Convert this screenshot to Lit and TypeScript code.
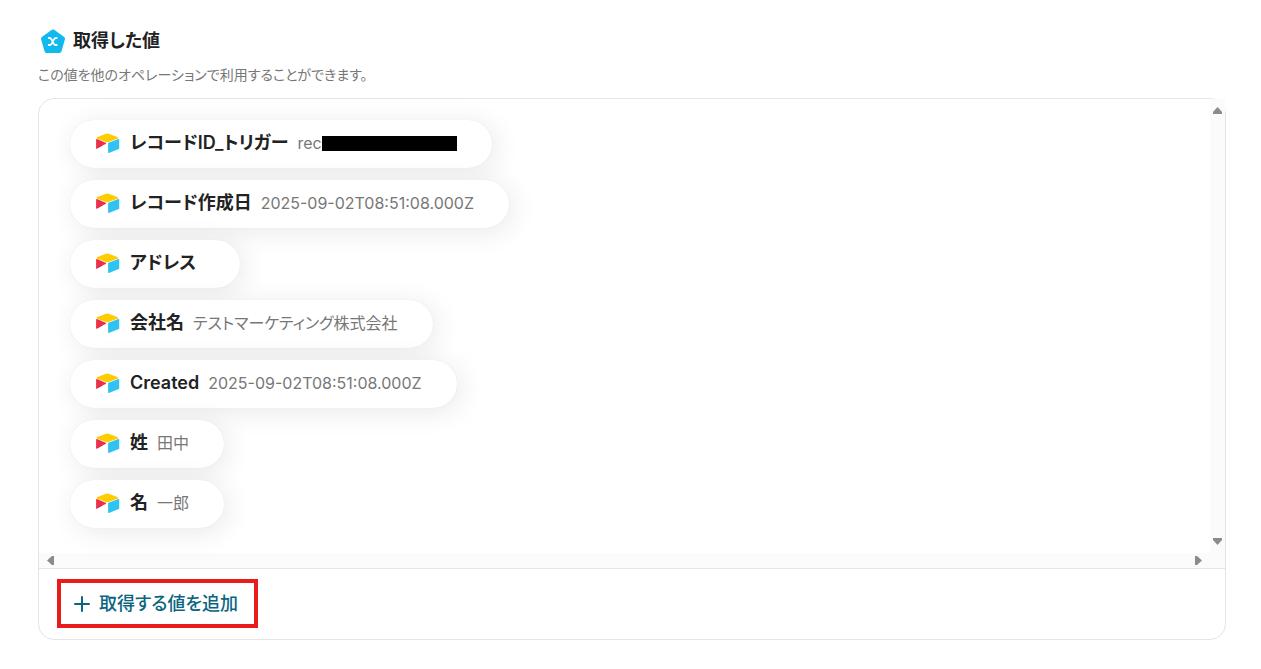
import { LitElement, html, css, nothing } from "lit";
import { customElement, property } from "lit/decorators.js";

interface FieldValue {
  name: string;
  value?: string;
  masked?: boolean;
}

const FIELDS: FieldValue[] = [
  { name: "レコードID_トリガー", value: "rec", masked: true },
  { name: "レコード作成日", value: "2025-09-02T08:51:08.000Z" },
  { name: "アドレス" },
  { name: "会社名", value: "テストマーケティング株式会社" },
  { name: "Created", value: "2025-09-02T08:51:08.000Z" },
  { name: "姓", value: "田中" },
  { name: "名", value: "一郎" },
];

@customElement("field-pill")
export class FieldPill extends LitElement {
  static styles = css`
    :host {
      display: flex;
      align-items: center;
      box-sizing: border-box;
      height: 48px;
      padding: 0 35px 2px 25px;
      border-radius: 24px;
      background: #fff;
      box-shadow: 0 0 1px rgba(0, 0, 0, 0.1), 4px 4px 28px rgba(0, 0, 0, 0.09);
    }
    .logo {
      width: 25px;
      height: 20px;
      flex: none;
      margin-right: 10px;
    }
    .name {
      font-size: 18px;
      line-height: 24px;
      font-weight: 600;
      color: #222;
      white-space: nowrap;
    }
    .value {
      display: flex;
      align-items: center;
      margin-left: 9px;
      font-size: 16px;
      line-height: 24px;
      color: #777;
      white-space: nowrap;
    }
    .mask {
      width: 135px;
      height: 15px;
      background: #000;
    }
  `;

  @property({ attribute: false }) field!: FieldValue;

  render() {
    const { name, value, masked } = this.field;
    return html`
      <svg class="logo" viewBox="0 0 25 20" aria-hidden="true">
        <path fill="#fc0" d="M11.100.7 1.800 4.300c-.5.200-.5.900 0 1.100l9.400 3.500c.8.300 1.600.3 2.400 0l9.300-3.500c.5-.2.5-.9 0-1.100L13.600.7c-.8-.3-1.700-.3-2.500 0z"/>
        <path fill="#31c2f2" d="M13.100 10.400v8.900c0 .4.400.7.800.6l9.900-3.800c.2-.1.400-.3.400-.6V6.600c0-.4-.4-.7-.8-.6L13.500 9.800c-.2.100-.4.300-.4.600z"/>
        <path fill="#ed3049" d="M10.800 10.900 7.800 12.300 2 15.400c-.4.200-.9-.1-.9-.5V6.600c0-.5.5-.7.900-.6l8.700 3.700c.5.200.6.900.1 1.200z"/>
        <path fill="#c62842" d="M7.800 12.300 2 15.400c-.3.100-.6 0-.8-.2L7 11.900z"/>
      </svg>
      <span class="name">${name}</span>
      <span class="value">${value ?? nothing}${masked ? html`<span class="mask"></span>` : nothing}</span>
    `;
  }
}

@customElement("app-root")
export class AppRoot extends LitElement {
  static styles = css`
    :host {
      display: block;
      padding: 26px 35px 29px 38px;
      background: #fff;
      font-family: Inter, "Noto Sans CJK JP", sans-serif;
      font-feature-settings: "palt";
      color: #222;
    }
    .head {
      display: flex;
      align-items: center;
      gap: 6px;
      height: 30px;
      padding-left: 1px;
    }
    .badge {
      width: 28px;
      height: 28px;
    }
    h2 {
      margin: 0;
      font-size: 18px;
      line-height: 30px;
      font-weight: 600;
    }
    .lead {
      margin: 8px 0 13px;
      font-size: 14px;
      line-height: 21px;
      color: #777;
    }
    .card {
      border: 1px solid #e5e5e5;
      border-radius: 16px;
    }
    .viewport {
      display: grid;
      grid-template-columns: 1fr 15px;
      grid-template-rows: auto 15px;
      border-bottom: 1px solid #e5e5e5;
    }
    .list {
      display: flex;
      flex-direction: column;
      align-items: flex-start;
      gap: 12px;
      margin: 0;
      padding: 21px 31px 25px;
      list-style: none;
    }
    .bar {
      display: flex;
      justify-content: space-between;
      background: #fbfbfb;
    }
    .bar.vertical {
      flex-direction: column;
    }
    .arrow {
      display: grid;
      place-items: center;
      width: 15px;
      height: 23px;
      padding: 0;
      border: 0;
      background: none;
      fill: #8b8b8b;
    }
    .bar.horizontal .arrow {
      width: 23px;
      height: 15px;
    }
    .corner {
      background: #fbfbfb;
    }
    .foot {
      padding: 10px 18px 11px;
    }
    .add {
      display: flex;
      align-items: center;
      gap: 8px;
      height: 49px;
      padding: 0 16px 0 12px;
      border: 4px solid #e81c1c;
      background: #fff;
      font: inherit;
      font-size: 18px;
      line-height: 24px;
      font-weight: 500;
      color: #0b6581;
      white-space: nowrap;
    }
    .plus {
      width: 18px;
      height: 18px;
      fill: none;
      stroke: currentColor;
      stroke-width: 2;
      stroke-linecap: round;
    }
  `;

  render() {
    return html`
      <header class="head">
        <svg class="badge" viewBox="0 0 28 28" aria-hidden="true">
          <path fill="#10b9ee" stroke="#10b9ee" stroke-width="4" stroke-linejoin="round" d="M14 4.500 24 11.600 20.500 24H7.500L4 11.600z"/>
          <path fill="none" stroke="#fff" stroke-width="1.800" stroke-linecap="round" stroke-linejoin="round" d="M9.700 11h.8c1 0 1.500.5 2 1.400l2.200 4.200c.5.900 1 1.400 2 1.400h1M17.700 11h-.7c-1 0-1.500.5-2 1.400l-2.300 4.200c-.5.900-1 1.400-2 1.400h-1"/>
        </svg>
        <h2>取得した値</h2>
      </header>
      <p class="lead">この値を他のオペレーションで利用することができます。</p>
      <section class="card">
        <div class="viewport">
          <ul class="list">
            ${FIELDS.map((f) => html`<li><field-pill .field=${f}></field-pill></li>`)}
          </ul>
          <div class="bar vertical">
            <button class="arrow" aria-label="上へ">
              <svg width="9" height="7" viewBox="0 0 9 7"><path d="M4.500 0 9 5v2H0V5z"/></svg>
            </button>
            <button class="arrow" aria-label="下へ">
              <svg width="9" height="7" viewBox="0 0 9 7"><path d="M4.500 7 9 2V0H0v2z"/></svg>
            </button>
          </div>
          <div class="bar horizontal">
            <button class="arrow" aria-label="左へ">
              <svg width="7" height="9" viewBox="0 0 7 9"><path d="M0 4.500 5 0h2v9H5z"/></svg>
            </button>
            <button class="arrow" aria-label="右へ">
              <svg width="7" height="9" viewBox="0 0 7 9"><path d="M7 4.500 2 0H0v9h2z"/></svg>
            </button>
          </div>
          <div class="corner"></div>
        </div>
        <footer class="foot">
          <button class="add">
            <svg class="plus" viewBox="0 0 18 18" aria-hidden="true"><path d="M9 2v14M2 9h14"/></svg>
            取得する値を追加
          </button>
        </footer>
      </section>
    `;
  }
}
